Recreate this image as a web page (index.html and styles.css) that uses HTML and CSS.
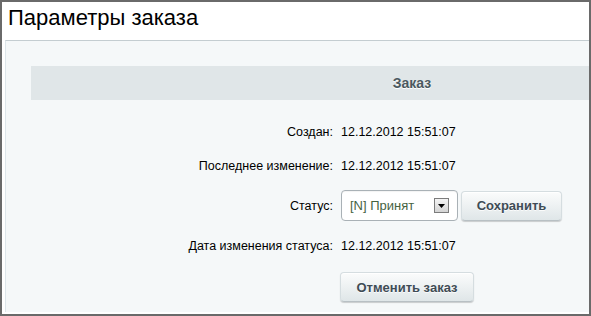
FILE: index.html
```html
<!DOCTYPE html>
<html lang="ru">
<head>
<meta charset="utf-8">
<title>Параметры заказа</title>
<link rel="stylesheet" href="styles.css">
</head>
<body>
<div class="window">
  <h1 class="title">Параметры заказа</h1>
  <div class="panel">
    <div class="table">
      <div class="head">Заказ</div>
      <div class="rows">
        <div class="label">Создан:</div>
        <div class="value">12.12.2012 15:51:07</div>

        <div class="label">Последнее изменение:</div>
        <div class="value">12.12.2012 15:51:07</div>

        <div class="label ctl">Статус:</div>
        <div class="value ctl">
          <div class="select">
            <span class="select-text">[N] Принят</span>
            <span class="arrow">
              <svg width="7" height="4" viewBox="0 0 7 4"><path d="M0 0H7L3.5 4Z" fill="#000"/></svg>
            </span>
          </div>
          <button class="btn btn-save">Сохранить</button>
        </div>

        <div class="label">Дата изменения статуса:</div>
        <div class="value">12.12.2012 15:51:07</div>

        <div class="label last"></div>
        <div class="value last">
          <button class="btn btn-cancel">Отменить заказ</button>
        </div>
      </div>
    </div>
  </div>
</div>
</body>
</html>
```

FILE: styles.css
```css
html, body {
  margin: 0;
  padding: 0;
  background: #fff;
}

.window {
  width: 591px;
  height: 316px;
  box-sizing: border-box;
  border: 2px solid #6a6a6a;
  background: #fff;
  overflow: hidden;
  font-family: "Liberation Sans", Arial, sans-serif;
  font-size: 12.5px;
  color: #000;
}

.title {
  margin: 0;
  height: 38px;
  padding: 3px 0 0 6px;
  box-sizing: border-box;
  font-size: 22px;
  font-weight: normal;
  line-height: 26px;
  color: #000;
}

.panel {
  margin-left: 3px;
  height: 272px;
  background: #f5f8f9;
  border-top: 1px solid #c4cdd1;
  border-left: 1px solid #dde6ea;
  padding: 25px 0 0 25px;
  box-sizing: border-box;
  overflow: hidden;
}

.table {
  width: 762px;
}

.head {
  height: 34px;
  line-height: 34px;
  background: #e0e6e8;
  text-align: center;
  font-size: 14px;
  font-weight: bold;
  color: #4b5960;
  text-shadow: 0 1px 0 #fff;
}

.rows {
  display: grid;
  grid-template-columns: 305px 1fr;
  margin-top: 15px;
}

.label,
.value {
  padding: 8px 0;
  line-height: 18px;
  display: flex;
  align-items: center;
}

.label {
  justify-content: flex-end;
  padding-right: 3px;
}

.value {
  padding-left: 5px;
  gap: 3px;
}

.ctl {
  padding-top: 7px;
}

.label.last,
.value.last {
  padding-top: 9px;
}

.select {
  width: 117px;
  height: 31px;
  box-sizing: border-box;
  border: 1px solid #a9b1b6;
  border-radius: 4px;
  background: #fff;
  display: flex;
  align-items: center;
  justify-content: space-between;
  padding: 0 8px 0 8px;
  font-size: 13px;
  box-shadow: inset 0 1px 1px rgba(0,0,0,0.05);
}

.select-text {
  color: #46633f;
}

.arrow {
  width: 15px;
  height: 15px;
  box-sizing: border-box;
  border: 1px solid #7c7c7c;
  background: linear-gradient(#f4f4f4, #d4d4d4);
  display: flex;
  align-items: center;
  justify-content: center;
}

.btn {
  height: 30px;
  box-sizing: border-box;
  border: 1px solid #d5dde0;
  border-bottom-color: #b8c0c4;
  border-radius: 4px;
  background: linear-gradient(#fbfcfc, #dfe6e8);
  box-shadow: 0 1px 1px rgba(0,0,0,0.18), inset 0 1px 0 #fff;
  font-family: "Liberation Sans", Arial, sans-serif;
  font-size: 13px;
  font-weight: bold;
  color: #3f4c55;
  text-shadow: 0 1px 0 rgba(255,255,255,0.8);
  padding: 0;
  cursor: pointer;
}

.btn-save {
  width: 101px;
}

.btn-cancel {
  width: 134px;
  margin-left: -1px;
}
```
